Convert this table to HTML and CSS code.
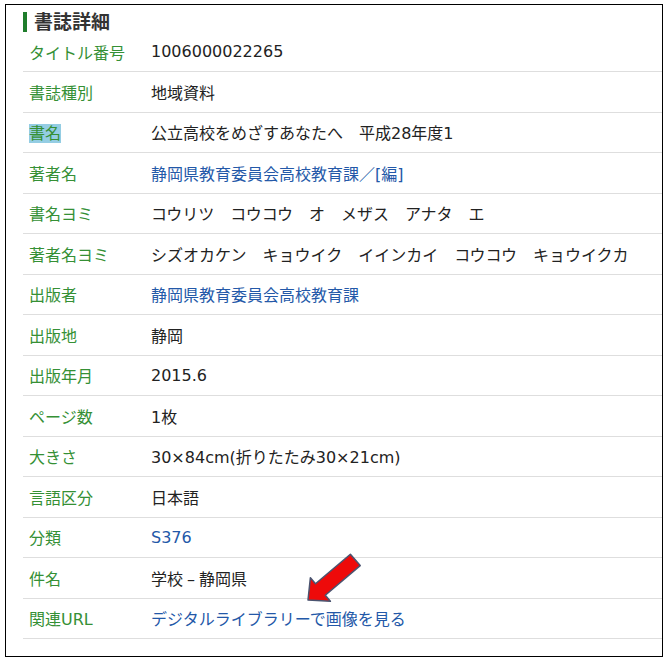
FILE: index.html
```html
<!DOCTYPE html>
<html lang="ja">
<head>
  <meta charset="UTF-8" />
  <meta name="viewport" content="width=device-width, initial-scale=1.0"/>
  <title>書誌詳細</title>
  <link rel="stylesheet" href="styles.css">
</head>
<body>
  <div class="frame">
    <h2 class="detail-title">書誌詳細</h2>
    <div class="detail-list">
      <div class="detail-row first">
        <div class="label">タイトル番号</div>
        <div class="value">1006000022265</div>
      </div>
      <div class="detail-row">
        <div class="label">書誌種別</div>
        <div class="value">地域資料</div>
      </div>
      <div class="detail-row">
        <div class="label"><span class="selected">書名</span></div>
        <div class="value">公立高校をめざすあなたへ　平成28年度1</div>
      </div>
      <div class="detail-row">
        <div class="label">著者名</div>
        <div class="value"><a href="#">静岡県教育委員会高校教育課／[編]</a></div>
      </div>
      <div class="detail-row">
        <div class="label">書名ヨミ</div>
        <div class="value">コウリツ　コウコウ　オ　メザス　アナタ　エ</div>
      </div>
      <div class="detail-row">
        <div class="label">著者名ヨミ</div>
        <div class="value">シズオカケン　キョウイク　イインカイ　コウコウ　キョウイクカ</div>
      </div>
      <div class="detail-row">
        <div class="label">出版者</div>
        <div class="value"><a href="#">静岡県教育委員会高校教育課</a></div>
      </div>
      <div class="detail-row">
        <div class="label">出版地</div>
        <div class="value">静岡</div>
      </div>
      <div class="detail-row">
        <div class="label">出版年月</div>
        <div class="value">2015.6</div>
      </div>
      <div class="detail-row">
        <div class="label">ページ数</div>
        <div class="value">1枚</div>
      </div>
      <div class="detail-row">
        <div class="label">大きさ</div>
        <div class="value">30×84cm(折りたたみ30×21cm)</div>
      </div>
      <div class="detail-row">
        <div class="label">言語区分</div>
        <div class="value">日本語</div>
      </div>
      <div class="detail-row">
        <div class="label">分類</div>
        <div class="value"><a href="#">S376</a></div>
      </div>
      <div class="detail-row">
        <div class="label">件名</div>
        <div class="value">学校<span class="dash">–</span>静岡県</div>
      </div>
      <div class="detail-row">
        <div class="label">関連URL</div>
        <div class="value"><a href="#">デジタルライブラリーで画像を見る</a></div>
      </div>
    </div>
  </div>

  <!-- 注釈の矢印 -->
  <svg class="arrow" width="671" height="666" viewBox="0 0 671 666">
    <polygon points="350.4,554.2 360.2,565.6 325.3,595.2 330.4,601.3 308,600 310.4,577.7 315.5,583.8"
             fill="#ee0a0a" stroke="#4a5470" stroke-width="1.5" stroke-linejoin="round"/>
  </svg>
</body>
</html>
```

FILE: styles.css
```css
body {
  margin: 0;
  font-family: 'DejaVu Sans', 'Noto Sans CJK JP', sans-serif;
  background-color: #ffffff;
  position: relative;
  width: 671px;
  height: 666px;
  overflow: hidden;
}

.frame {
  box-sizing: border-box;
  width: 658px;
  margin: 4px 0 0 5px;
  padding: 0 0 17px 17px;
  border: 1px solid #000;
  overflow: hidden;
}

.detail-title {
  margin: 7px 0 0;
  height: 20px;
  line-height: 20px;
  border-left: 4px solid #1f7d2c;
  padding-left: 7px;
  font-size: 19px;
  font-weight: bold;
  color: #333;
}

.detail-row {
  box-sizing: border-box;
  display: grid;
  grid-template-columns: 128px 1fr;
  align-items: center;
  height: 40.5px;
  border-bottom: 1px solid #dedede;
  font-size: 16px;
  white-space: nowrap;
}

.detail-row.first {
  height: 40px;
}

.label {
  padding-left: 6px;
  color: #359035;
}

.selected {
  background: #94cde3;
}

.value {
  color: #222;
}

.value a {
  color: #2358a8;
  text-decoration: none;
}

.dash {
  margin: 0 4px;
}

.arrow {
  position: absolute;
  top: 0;
  left: 0;
  pointer-events: none;
}
```
